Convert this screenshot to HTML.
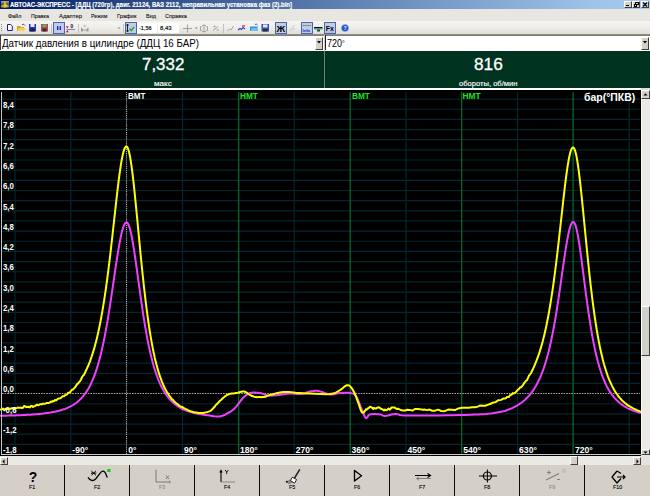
<!DOCTYPE html>
<html><head><meta charset="utf-8">
<style>
*{margin:0;padding:0;box-sizing:border-box}
html,body{width:650px;height:496px;overflow:hidden;background:#d4d0c8;font-family:"Liberation Sans",sans-serif;position:relative}
.abs{position:absolute}
.tx{position:absolute;white-space:nowrap;transform-origin:0 0}
.b3{position:absolute;background:#d4d0c8;border-top:1px solid #fff;border-left:1px solid #fff;border-right:1px solid #404040;border-bottom:1px solid #404040}
</style></head><body>
<div class="abs" style="left:0;top:0;width:650px;height:9px;background:linear-gradient(90deg,#001a62 0%,#1e3c7c 15%,#3a5a92 30.5%,#6e90c0 62%,#9ec2e8 91%,#a8cbf0 100%)"></div>
<svg class="abs" style="left:1px;top:1px" width="8" height="7" viewBox="0 0 8 7">
<defs><linearGradient id="ig" x1="0" y1="0" x2="0" y2="1"><stop offset="0" stop-color="#a8a8a0"/><stop offset="0.55" stop-color="#404068"/><stop offset="1" stop-color="#303040"/></linearGradient></defs>
<rect x="0" y="0" width="8" height="7" fill="url(#ig)"/>
<rect x="3" y="0.3" width="1.8" height="4.5" fill="#d8c020"/>
<path d="M0.3,4 L3,3.6 L5,3.4 L7.7,4 L7.7,6.3 L5,6.6 L3.5,7 L2.8,6.4 L0.3,6.2z" fill="#c8a818"/>
<circle cx="4.4" cy="4.6" r="1.3" fill="#f0e020"/></svg>
<div id="t_title" class="tx" style="left:10.00px;top:0.94px;font-size:6.4px;line-height:7.68px;font-weight:bold;color:#fff;transform:scaleX(0.9405);-webkit-text-stroke:0.15px #fff;">АВТОАС-ЭКСПРЕСС - [ДДЦ (720гр), двиг. 21124, ВАЗ 2112, неправильная установка фаз (2).bin]</div>
<div class="b3" style="left:624px;top:1px;width:8px;height:7px"></div>
<div class="b3" style="left:632px;top:1px;width:8px;height:7px"></div>
<div class="b3" style="left:641px;top:1px;width:8px;height:7px"></div>
<div class="abs" style="left:626px;top:5px;width:3px;height:1px;background:#000"></div>
<div class="abs" style="left:635px;top:2px;width:4px;height:3px;border:1px solid #000;border-top-width:1.5px"></div><div class="abs" style="left:634px;top:4px;width:3px;height:3px;border:1px solid #000;background:#d4d0c8"></div>
<svg class="abs" style="left:642px;top:2px" width="6" height="5" viewBox="0 0 6 5"><path d="M1,0.5 L5,4.5 M5,0.5 L1,4.5" stroke="#000" stroke-width="1.2"/></svg>
<div class="abs" style="left:0;top:9px;width:650px;height:12px;background:#e8e6e1"></div>
<div id="m1" class="tx" style="left:7.90px;top:12.91px;font-size:5.8px;line-height:6.96px;font-weight:normal;color:#101010;transform:scaleX(0.9323);-webkit-text-stroke:0.1px #101010;">Файл</div>
<div id="m2" class="tx" style="left:31.00px;top:12.91px;font-size:5.8px;line-height:6.96px;font-weight:normal;color:#101010;transform:scaleX(0.9187);-webkit-text-stroke:0.1px #101010;">Правка</div>
<div id="m3" class="tx" style="left:58.90px;top:12.91px;font-size:5.8px;line-height:6.96px;font-weight:normal;color:#101010;transform:scaleX(1.0108);-webkit-text-stroke:0.1px #101010;">Адаптер</div>
<div id="m4" class="tx" style="left:90.90px;top:12.91px;font-size:5.8px;line-height:6.96px;font-weight:normal;color:#101010;transform:scaleX(0.9119);-webkit-text-stroke:0.1px #101010;">Режим</div>
<div id="m5" class="tx" style="left:116.90px;top:12.91px;font-size:5.8px;line-height:6.96px;font-weight:normal;color:#101010;transform:scaleX(0.9792);-webkit-text-stroke:0.1px #101010;">График</div>
<div id="m6" class="tx" style="left:145.60px;top:12.91px;font-size:5.8px;line-height:6.96px;font-weight:normal;color:#101010;transform:scaleX(0.9429);-webkit-text-stroke:0.1px #101010;">Вид</div>
<div id="m7" class="tx" style="left:165.20px;top:12.91px;font-size:5.8px;line-height:6.96px;font-weight:normal;color:#101010;transform:scaleX(0.9582);-webkit-text-stroke:0.1px #101010;">Справка</div>
<div class="abs" style="left:0;top:21px;width:650px;height:14px;background:linear-gradient(180deg,#f6f5f2 0%,#efeee9 45%,#dedbd3 100%)"></div>
<div class="abs" style="left:0;top:34px;width:650px;height:1px;background:#8e8c87"></div>
<div class="abs" style="left:1px;top:24px;width:1px;height:1px;background:#8a8a8a"></div>
<div class="abs" style="left:1px;top:26px;width:1px;height:1px;background:#8a8a8a"></div>
<div class="abs" style="left:1px;top:28px;width:1px;height:1px;background:#8a8a8a"></div>
<div class="abs" style="left:1px;top:30px;width:1px;height:1px;background:#8a8a8a"></div>
<div class="abs" style="left:53px;top:22px;width:12.0px;height:12px;background:#c1cde6;border:1px solid #4a68a8"></div>
<div class="abs" style="left:125px;top:22px;width:11.5px;height:12px;background:#c1cde6;border:1px solid #4a68a8"></div>
<div class="abs" style="left:275px;top:22px;width:11.5px;height:12px;background:#c1cde6;border:1px solid #4a68a8"></div>
<div class="abs" style="left:301px;top:22px;width:11.7px;height:12px;background:#c1cde6;border:1px solid #4a68a8"></div>
<div class="abs" style="left:324.2px;top:22px;width:11.6px;height:12px;background:#c1cde6;border:1px solid #4a68a8"></div>
<div class="abs" style="left:51.0px;top:24px;width:1px;height:9px;background:#c5c2bb"></div>
<div class="abs" style="left:78.0px;top:24px;width:1px;height:9px;background:#c5c2bb"></div>
<div class="abs" style="left:122.5px;top:24px;width:1px;height:9px;background:#c5c2bb"></div>
<div class="abs" style="left:223.3px;top:24px;width:1px;height:9px;background:#c5c2bb"></div>
<svg class="abs" style="left:0;top:21px" width="360" height="14" viewBox="0 21 360 14">
<!-- new -->
<path d="M7.5,24.5 h3.2 l1.6,1.6 v4.4 h-4.8z" fill="#fff" stroke="#1a1aa0" stroke-width="1"/>
<!-- open folder -->
<path d="M17,26 h3 l1,1 h3 v4 h-7z" fill="#d8a820"/><path d="M17.5,31 l1.5,-3 h6.5 l-1.5,3z" fill="#f4d060"/>
<path d="M22,24.5 q2,-1 3,1" stroke="#3050b0" stroke-width="1" fill="none"/>
<!-- save blue -->
<rect x="29" y="24" width="7" height="7.5" fill="#2838c0"/><rect x="30.5" y="24" width="4" height="3" fill="#e8e8f0"/><rect x="30.5" y="28.5" width="4" height="3" fill="#202020"/>
<!-- save red -->
<rect x="41" y="24" width="7" height="7.5" fill="#c04060"/><rect x="42.5" y="24.5" width="4" height="2.5" fill="#50c050"/><rect x="42.5" y="28.5" width="4" height="3" fill="#303030"/>
<!-- pause -->
<rect x="57" y="26.2" width="1.3" height="3.8" fill="#1010d0"/><rect x="59.6" y="26.2" width="1.3" height="3.8" fill="#1010d0"/>
<!-- zero icon -->
<path d="M65.8,26.3 h3 l-1.5,2.2z M65.8,32.2 h3 l-1.5,-2.2z" fill="#e01818"/><rect x="66.5" y="29" width="8.5" height="0.9" fill="#5a7ae0"/>
<text x="70.6" y="28.1" font-size="4.8" font-weight="bold" font-family="Liberation Sans" fill="#000">0</text>
<!-- gray axis icon -->
<path d="M81.5,30 h6.5 M83,28.6 l-1.5,1.4 l1.5,1.4 M86.5,28.6 l1.5,1.4 l-1.5,1.4 M81.5,27.5 v4 M88,27.5 v4" stroke="#8a8a8a" stroke-width="0.8" fill="none"/>
<path d="M83.7,24.8 l2,2 M85.7,24.8 l-2,2" stroke="#9a9a9a" stroke-width="0.7"/>
<path d="M117.5,27.5 h3 l-1.5,1.6z" fill="#888"/>
<!-- check btn -->
<path d="M127.5,24 v8 M126.5,25.5 l1,-1.5 l1,1.5 M126.5,30.5 l1,1.5 l1,-1.5" stroke="#202020" stroke-width="1" fill="none"/>
<path d="M129.6,28.6 l1.6,2 l2.9,-3.8" stroke="#10a030" stroke-width="1.3" fill="none"/>
<!-- crosshair gray -->
<path d="M183,28.5 h9 M187.5,24.5 v8" stroke="#9a9a9a" stroke-width="0.9" fill="none"/><path d="M195,27.5 h2.6 l-1.3,1.5z" fill="#777"/>
<path d="M202,26 q2,-2 4,0 M202,31 q2,2 4,0 M201,26 q-1,2.5 0,5 M207,26 q1,2.5 0,5 M204,26.5 v4" stroke="#8a8a8a" stroke-width="0.9" fill="none"/>
<path d="M213,30.5 l5,-4 M213.5,26.5 h2 M214.5,25.5 v2 M216.5,30 h2.5" stroke="#9a9a9a" stroke-width="0.9" fill="none"/>
<!-- gray curve -->
<path d="M227.5,31 l2,-2 l1.5,1 l2.5,-4" stroke="#a0a0a0" stroke-width="0.9" fill="none"/>
<!-- blue red curve -->
<path d="M238,30 l2,-1.5 l1.5,1 l1.5,-2 l2,1.5" stroke="#2040e0" stroke-width="1.2" fill="none"/><path d="M242,26 h3" stroke="#e02020" stroke-width="1.2"/>
<!-- folder blue -->
<path d="M250,26.5 h7.5 v4.5 h-7.5z" fill="#4090d0"/><path d="M250.5,31 l1.5,-3 h6l-1.5,3z" fill="#70c0f0"/><path d="M255,24.5 q1.5,-1 2.5,0.5" stroke="#203080" stroke-width="0.8" fill="none"/>
<!-- floppy -->
<rect x="261.5" y="24" width="7.5" height="7.5" fill="#3050b0"/><rect x="263" y="24.5" width="4.5" height="3" fill="#e0e8f8"/><rect x="263" y="29" width="4.5" height="2.5" fill="#303030"/>
<!-- Ж -->
<text x="276.5" y="31.8" font-size="9.5" font-weight="bold" font-family="Liberation Sans" fill="#000">Ж</text>
<!-- gray disabled -->
<path d="M289.5,31 l5,-6 M291,30.5 l2,-2 l2,1" stroke="#c8c8c8" stroke-width="0.9" fill="none"/>
<!-- info -->
<path d="M303,25.5 h8" stroke="#408060" stroke-width="1" stroke-dasharray="1.5,0.7"/><text x="302.5" y="31.5" font-size="4.2" font-weight="bold" font-family="Liberation Sans" fill="#1020d0">Info</text>
<!-- black teal -->
<rect x="314" y="27" width="8.5" height="1.5" fill="#101010"/><rect x="314" y="28.5" width="8.5" height="1" fill="#20b0a0"/><rect x="317" y="29.5" width="3" height="2" fill="#404040"/>
<!-- Fx -->
<text x="325.8" y="30.5" font-size="7" font-weight="bold" font-family="Liberation Sans" fill="#000">Fx</text><path d="M326,32 h8" stroke="#6090c0" stroke-width="0.7" stroke-dasharray="1,0.6"/>
<!-- help -->
<circle cx="345" cy="28" r="3.6" fill="#2050d0"/><circle cx="345" cy="28" r="3.6" fill="none" stroke="#90b0f0" stroke-width="0.6"/><text x="343.6" y="30.2" font-size="5" font-weight="bold" font-family="Liberation Sans" fill="#fff">?</text>
</svg>
<div class="abs" style="left:137px;top:23.4px;width:20px;height:10px;background:#fff"></div>
<div class="abs" style="left:157.7px;top:23.4px;width:21.3px;height:10px;background:#fff"></div>
<div id="tb1" class="tx" style="left:139.00px;top:24.90px;font-size:5.6px;line-height:6.72px;font-weight:normal;color:#000;transform:scaleX(0.9804);-webkit-text-stroke:0.15px #000;">-1,56</div>
<div id="tb2" class="tx" style="left:160.00px;top:24.90px;font-size:5.6px;line-height:6.72px;font-weight:normal;color:#000;transform:scaleX(1.0560);-webkit-text-stroke:0.15px #000;">8,43</div>
<div class="abs" style="left:0;top:35px;width:650px;height:16px;background:#fff"></div>
<div class="abs" style="left:0;top:35px;width:324px;height:1px;background:#7f7d78"></div>
<div class="abs" style="left:0;top:35px;width:1px;height:15px;background:#404040"></div>
<div class="abs" style="left:324px;top:35px;width:1px;height:16px;background:#d4d0c8"></div>
<div class="abs" style="left:325px;top:35px;width:325px;height:1px;background:#7f7d78"></div>
<div class="abs" style="left:325px;top:35px;width:1px;height:15px;background:#202020"></div>
<div class="b3" style="left:315.3px;top:36.5px;width:8px;height:13.5px"></div>
<svg class="abs" style="left:317.3px;top:41px" width="4" height="3" viewBox="0 0 4 3"><path d="M0,0 h4 l-2,2.5z" fill="#000"/></svg>
<div class="b3" style="left:641px;top:36.5px;width:8px;height:13.5px"></div>
<svg class="abs" style="left:643px;top:41px" width="4" height="3" viewBox="0 0 4 3"><path d="M0,0 h4 l-2,2.5z" fill="#000"/></svg>
<div id="dd1" class="tx" style="left:2.30px;top:37.53px;font-size:10px;line-height:12.0px;font-weight:normal;color:#000;transform:scaleX(0.9754);">Датчик давления в цилиндре (ДДЦ 16 БАР)</div>
<div id="dd2" class="tx" style="left:327.10px;top:37.53px;font-size:10px;line-height:12.0px;font-weight:normal;color:#000;transform:scaleX(0.8949);">720<span style="font-size:8px;vertical-align:1px">°</span></div>
<div class="abs" style="left:0;top:51px;width:650px;height:36.5px;background:#003220"></div>
<div class="abs" style="left:324px;top:51px;width:1px;height:36.5px;background:#6f8078"></div>
<div id="g1" class="tx" style="left:141.50px;top:54.51px;font-size:17px;line-height:20.4px;font-weight:normal;color:#fff;transform:scaleX(0.9942);-webkit-text-stroke:0.3px #fff;">7,332</div>
<div id="g2" class="tx" style="left:153.80px;top:78.73px;font-size:8px;line-height:9.6px;font-weight:normal;color:#fff;transform:scaleX(1.0087);-webkit-text-stroke:0.15px #fff;">макс</div>
<div id="g3" class="tx" style="left:473.50px;top:54.51px;font-size:17px;line-height:20.4px;font-weight:normal;color:#fff;transform:scaleX(1.0150);-webkit-text-stroke:0.3px #fff;">816</div>
<div id="g4" class="tx" style="left:458.50px;top:78.73px;font-size:8px;line-height:9.6px;font-weight:normal;color:#fff;transform:scaleX(0.9465);-webkit-text-stroke:0.15px #fff;">обороты, об/мин</div>
<div class="abs" style="left:0;top:87.5px;width:650px;height:2.6px;background:#fff"></div>
<div class="abs" style="left:641px;top:88px;width:9px;height:2.5px;background:#dedcd6"></div>
<svg class="abs" style="left:0;top:90px" width="641" height="365" viewBox="0 0 641 365">
<rect x="0" y="0" width="641" height="365" fill="#000"/>
<line x1="2" y1="9.08" x2="640" y2="9.08" stroke="#03262f" stroke-width="1.2"/>
<line x1="2" y1="19.23" x2="640" y2="19.23" stroke="#03262f" stroke-width="1.2"/>
<line x1="2" y1="29.39" x2="640" y2="29.39" stroke="#03262f" stroke-width="1.2"/>
<line x1="2" y1="39.54" x2="640" y2="39.54" stroke="#03262f" stroke-width="1.2"/>
<line x1="2" y1="49.70" x2="640" y2="49.70" stroke="#03262f" stroke-width="1.2"/>
<line x1="2" y1="59.86" x2="640" y2="59.86" stroke="#03262f" stroke-width="1.2"/>
<line x1="2" y1="70.01" x2="640" y2="70.01" stroke="#03262f" stroke-width="1.2"/>
<line x1="2" y1="80.17" x2="640" y2="80.17" stroke="#03262f" stroke-width="1.2"/>
<line x1="2" y1="90.32" x2="640" y2="90.32" stroke="#03262f" stroke-width="1.2"/>
<line x1="2" y1="100.48" x2="640" y2="100.48" stroke="#03262f" stroke-width="1.2"/>
<line x1="2" y1="110.64" x2="640" y2="110.64" stroke="#03262f" stroke-width="1.2"/>
<line x1="2" y1="120.79" x2="640" y2="120.79" stroke="#03262f" stroke-width="1.2"/>
<line x1="2" y1="130.95" x2="640" y2="130.95" stroke="#03262f" stroke-width="1.2"/>
<line x1="2" y1="141.10" x2="640" y2="141.10" stroke="#03262f" stroke-width="1.2"/>
<line x1="2" y1="151.26" x2="640" y2="151.26" stroke="#03262f" stroke-width="1.2"/>
<line x1="2" y1="161.42" x2="640" y2="161.42" stroke="#03262f" stroke-width="1.2"/>
<line x1="2" y1="171.57" x2="640" y2="171.57" stroke="#03262f" stroke-width="1.2"/>
<line x1="2" y1="181.73" x2="640" y2="181.73" stroke="#03262f" stroke-width="1.2"/>
<line x1="2" y1="191.88" x2="640" y2="191.88" stroke="#03262f" stroke-width="1.2"/>
<line x1="2" y1="202.04" x2="640" y2="202.04" stroke="#03262f" stroke-width="1.2"/>
<line x1="2" y1="212.20" x2="640" y2="212.20" stroke="#03262f" stroke-width="1.2"/>
<line x1="2" y1="222.35" x2="640" y2="222.35" stroke="#03262f" stroke-width="1.2"/>
<line x1="2" y1="232.51" x2="640" y2="232.51" stroke="#03262f" stroke-width="1.2"/>
<line x1="2" y1="242.66" x2="640" y2="242.66" stroke="#03262f" stroke-width="1.2"/>
<line x1="2" y1="252.82" x2="640" y2="252.82" stroke="#03262f" stroke-width="1.2"/>
<line x1="2" y1="262.98" x2="640" y2="262.98" stroke="#03262f" stroke-width="1.2"/>
<line x1="2" y1="273.13" x2="640" y2="273.13" stroke="#03262f" stroke-width="1.2"/>
<line x1="2" y1="283.29" x2="640" y2="283.29" stroke="#03262f" stroke-width="1.2"/>
<line x1="2" y1="293.44" x2="640" y2="293.44" stroke="#03262f" stroke-width="1.2"/>
<line x1="2" y1="313.76" x2="640" y2="313.76" stroke="#03262f" stroke-width="1.2"/>
<line x1="2" y1="323.91" x2="640" y2="323.91" stroke="#03262f" stroke-width="1.2"/>
<line x1="2" y1="334.07" x2="640" y2="334.07" stroke="#03262f" stroke-width="1.2"/>
<line x1="2" y1="344.22" x2="640" y2="344.22" stroke="#03262f" stroke-width="1.2"/>
<line x1="2" y1="354.38" x2="640" y2="354.38" stroke="#03262f" stroke-width="1.2"/>
<line x1="15.02" y1="2" x2="15.02" y2="364" stroke="#03262f" stroke-width="1.2"/>
<line x1="70.86" y1="2" x2="70.86" y2="364" stroke="#03262f" stroke-width="1.2"/>
<line x1="182.54" y1="2" x2="182.54" y2="364" stroke="#03262f" stroke-width="1.2"/>
<line x1="238.75" y1="2" x2="238.75" y2="364" stroke="#06702c" stroke-width="1.2"/>
<line x1="294.22" y1="2" x2="294.22" y2="364" stroke="#03262f" stroke-width="1.2"/>
<line x1="350.20" y1="2" x2="350.20" y2="364" stroke="#06702c" stroke-width="1.2"/>
<line x1="405.90" y1="2" x2="405.90" y2="364" stroke="#03262f" stroke-width="1.2"/>
<line x1="461.65" y1="2" x2="461.65" y2="364" stroke="#06702c" stroke-width="1.2"/>
<line x1="517.58" y1="2" x2="517.58" y2="364" stroke="#03262f" stroke-width="1.2"/>
<line x1="573.10" y1="2" x2="573.10" y2="364" stroke="#06702c" stroke-width="1.2"/>
<line x1="629.26" y1="2" x2="629.26" y2="364" stroke="#03262f" stroke-width="1.2"/>
<line x1="126.5" y1="2" x2="126.5" y2="364" stroke="#a8aeb4" stroke-width="1.1" stroke-dasharray="1.1,0.8"/>
<line x1="2" y1="303.50" x2="640" y2="303.50" stroke="#a0a0a0" stroke-width="1" stroke-dasharray="1.6,1"/>
<path d="M0.00,325.80 L1.00,325.78 L2.00,325.76 L3.00,325.74 L4.00,325.71 L5.00,325.69 L6.00,325.67 L7.00,325.64 L8.00,325.61 L9.00,325.59 L10.00,325.56 L11.00,325.53 L12.00,325.50 L13.00,325.47 L14.00,325.44 L15.00,325.40 L16.00,325.37 L17.00,325.33 L18.00,325.29 L19.00,325.25 L20.00,325.21 L21.00,325.17 L22.00,325.12 L23.00,325.08 L24.00,325.03 L25.00,324.98 L26.00,324.93 L27.00,324.87 L28.00,324.82 L29.00,324.76 L30.00,324.69 L31.00,324.63 L32.00,324.56 L33.00,324.49 L34.00,324.42 L35.00,324.34 L36.00,324.26 L37.00,324.17 L38.00,324.09 L39.00,323.99 L40.00,323.90 L41.00,323.79 L42.00,323.69 L43.00,323.57 L44.00,323.46 L45.00,323.33 L46.00,323.20 L47.00,323.07 L48.00,322.92 L49.00,322.77 L50.00,322.62 L51.00,322.45 L52.00,322.27 L53.00,322.09 L54.00,321.89 L55.00,321.69 L56.00,321.47 L57.00,321.24 L58.00,321.00 L59.00,320.74 L60.00,320.47 L61.00,320.18 L62.00,319.88 L63.00,319.55 L64.00,319.21 L65.00,318.85 L66.00,318.46 L67.00,318.06 L68.00,317.62 L69.00,317.16 L70.00,316.67 L71.00,316.15 L72.00,315.59 L73.00,315.00 L74.00,314.37 L75.00,313.69 L76.00,312.97 L77.00,312.20 L78.00,311.38 L79.00,310.51 L80.00,309.57 L81.00,308.56 L82.00,307.49 L83.00,306.34 L84.00,305.10 L85.00,303.78 L86.00,302.37 L87.00,300.85 L88.00,299.21 L89.00,297.46 L90.00,295.59 L91.00,293.57 L92.00,291.41 L93.00,289.09 L94.00,286.60 L95.00,283.93 L96.00,281.06 L97.00,278.00 L98.00,274.71 L99.00,271.20 L100.00,267.45 L100.25,266.48 L100.50,265.49 L100.75,264.48 L101.00,263.46 L101.25,262.42 L101.50,261.36 L101.75,260.29 L102.00,259.20 L102.25,258.09 L102.50,256.97 L102.75,255.83 L103.00,254.67 L103.25,253.50 L103.50,252.31 L103.75,251.10 L104.00,249.87 L104.25,248.63 L104.50,247.37 L104.75,246.09 L105.00,244.80 L105.25,243.48 L105.50,242.16 L105.75,240.81 L106.00,239.45 L106.25,238.06 L106.50,236.67 L106.75,235.25 L107.00,233.82 L107.25,232.38 L107.50,230.91 L107.75,229.43 L108.00,227.94 L108.25,226.43 L108.50,224.90 L108.75,223.36 L109.00,221.81 L109.25,220.24 L109.50,218.66 L109.75,217.06 L110.00,215.45 L110.25,213.83 L110.50,212.20 L110.75,210.56 L111.00,208.91 L111.25,207.25 L111.50,205.57 L111.75,203.89 L112.00,202.21 L112.25,200.51 L112.50,198.81 L112.75,197.11 L113.00,195.40 L113.25,193.69 L113.50,191.97 L113.75,190.26 L114.00,188.54 L114.25,186.83 L114.50,185.12 L114.75,183.41 L115.00,181.70 L115.25,180.01 L115.50,178.31 L115.75,176.63 L116.00,174.96 L116.25,173.30 L116.50,171.65 L116.75,170.01 L117.00,168.39 L117.25,166.79 L117.50,165.21 L117.75,163.64 L118.00,162.10 L118.25,160.58 L118.50,159.08 L118.75,157.61 L119.00,156.17 L119.25,154.76 L119.50,153.37 L119.75,152.02 L120.00,150.71 L120.25,149.42 L120.50,148.18 L120.75,146.97 L121.00,145.80 L121.25,144.68 L121.50,143.59 L121.75,142.55 L122.00,141.55 L122.25,140.60 L122.50,139.70 L122.75,138.85 L123.00,138.05 L123.25,137.29 L123.50,136.59 L123.75,135.94 L124.00,135.35 L124.25,134.81 L124.50,134.32 L124.75,133.90 L125.00,133.52 L125.25,133.21 L125.50,132.95 L125.75,132.75 L126.00,132.61 L126.25,132.53 L126.50,132.50 L126.75,132.54 L127.00,132.65 L127.25,132.82 L127.50,133.07 L127.75,133.38 L128.00,133.76 L128.25,134.20 L128.50,134.71 L128.75,135.29 L129.00,135.93 L129.25,136.63 L129.50,137.39 L129.75,138.21 L130.00,139.10 L130.25,140.04 L130.50,141.03 L130.75,142.08 L131.00,143.19 L131.25,144.34 L131.50,145.55 L131.75,146.80 L132.00,148.10 L132.25,149.44 L132.50,150.82 L132.75,152.24 L133.00,153.70 L133.25,155.20 L133.50,156.73 L133.75,158.30 L134.00,159.89 L134.25,161.51 L134.50,163.16 L134.75,164.83 L135.00,166.53 L135.25,168.24 L135.50,169.97 L135.75,171.73 L136.00,173.49 L136.25,175.27 L136.50,177.06 L136.75,178.86 L137.00,180.67 L137.25,182.48 L137.50,184.30 L137.75,186.12 L138.00,187.95 L138.25,189.77 L138.50,191.60 L138.75,193.42 L139.00,195.24 L139.25,197.05 L139.50,198.86 L139.75,200.66 L140.00,202.46 L140.25,204.25 L140.50,206.02 L140.75,207.79 L141.00,209.54 L141.25,211.28 L141.50,213.01 L141.75,214.73 L142.00,216.43 L142.25,218.12 L142.50,219.79 L142.75,221.45 L143.00,223.08 L143.25,224.71 L143.50,226.31 L143.75,227.90 L144.00,229.47 L144.25,231.02 L144.50,232.56 L144.75,234.07 L145.00,235.57 L145.25,237.05 L145.50,238.51 L145.75,239.95 L146.00,241.37 L146.25,242.77 L146.50,244.15 L146.75,245.51 L147.00,246.86 L147.25,248.18 L147.50,249.49 L147.75,250.77 L148.00,252.04 L148.25,253.28 L148.50,254.51 L148.75,255.72 L149.00,256.91 L149.25,258.08 L149.50,259.24 L149.75,260.37 L150.00,261.49 L150.25,262.59 L150.50,263.67 L150.75,264.73 L151.00,265.78 L151.25,266.81 L151.50,267.82 L151.75,268.81 L152.00,269.79 L152.25,270.75 L152.50,271.70 L152.75,272.63 L153.00,273.54 L153.25,274.44 L153.50,275.32 L153.75,276.19 L154.00,277.04 L154.25,277.88 L154.50,278.70 L154.75,279.51 L155.00,280.30 L156.00,283.35 L157.00,286.18 L158.00,288.82 L159.00,291.28 L160.00,293.57 L161.00,295.70 L162.00,297.69 L163.00,299.55 L164.00,301.27 L165.00,302.88 L166.00,304.39 L167.00,305.79 L168.00,307.10 L169.00,308.33 L170.00,309.47 L171.00,310.54 L172.00,311.55 L173.00,312.49 L174.00,313.37 L175.00,314.20 L176.00,314.97 L177.00,315.70 L178.00,316.39 L179.00,317.03 L180.00,317.64 L181.00,318.21 L182.00,319.00 L183.26,319.45 L184.96,320.09 L187.00,320.84 L189.26,321.62 L191.63,322.37 L194.00,323.00 L196.50,323.54 L199.26,324.04 L202.12,324.50 L204.96,324.92 L207.63,325.29 L210.00,325.60 L212.04,325.89 L213.85,326.16 L215.50,326.38 L217.04,326.51 L218.52,326.53 L220.00,326.40 L221.47,326.08 L222.89,325.60 L224.25,325.00 L225.56,324.33 L226.81,323.65 L228.00,323.00 L229.13,322.39 L230.19,321.79 L231.19,321.16 L232.15,320.50 L233.08,319.79 L234.00,319.00 L234.89,318.12 L235.74,317.15 L236.56,316.12 L237.37,315.07 L238.18,314.02 L239.00,313.00 L239.82,311.98 L240.63,310.93 L241.44,309.88 L242.26,308.85 L243.11,307.88 L244.00,307.00 L244.90,306.17 L245.78,305.37 L246.69,304.62 L247.67,303.96 L248.76,303.41 L250.00,303.00 L251.44,302.74 L253.04,302.61 L254.75,302.59 L256.52,302.66 L258.29,302.80 L260.00,303.00 L261.55,303.34 L262.96,303.84 L264.38,304.43 L265.93,304.98 L267.75,305.40 L270.00,305.60 L272.87,305.51 L276.30,305.19 L280.00,304.74 L283.70,304.26 L287.13,303.85 L290.00,303.60 L292.25,303.56 L294.07,303.66 L295.62,303.83 L297.04,303.99 L298.45,304.07 L300.00,304.00 L301.69,303.74 L303.41,303.34 L305.12,302.86 L306.81,302.37 L308.45,301.93 L310.00,301.60 L311.40,301.35 L312.67,301.12 L313.88,300.94 L315.11,300.84 L316.46,300.85 L318.00,301.00 L319.79,301.39 L321.78,302.01 L323.88,302.75 L326.00,303.47 L328.07,304.06 L330.00,304.40 L331.78,304.43 L333.48,304.24 L335.12,303.91 L336.74,303.54 L338.36,303.21 L340.00,303.00 L341.71,302.88 L343.48,302.79 L345.25,302.73 L346.96,302.73 L348.56,302.81 L350.00,303.00 L351.23,303.20 L352.30,303.37 L353.25,303.62 L354.15,304.07 L355.05,304.83 L356.00,306.00 L357.02,307.77 L358.07,310.07 L359.12,312.69 L360.15,315.37 L361.12,317.89 L362.00,320.00 L362.78,321.81 L363.48,323.54 L364.12,325.10 L364.74,326.41 L365.36,327.41 L366.00,328.00 L366.60,328.03 L367.11,327.53 L367.62,326.70 L368.22,325.76 L368.99,324.93 L370.00,324.40 L371.38,324.17 L373.07,324.07 L374.94,324.07 L376.81,324.15 L378.55,324.27 L380.00,324.40 L381.06,324.62 L381.85,324.95 L382.50,325.32 L383.15,325.67 L383.94,325.92 L385.00,326.00 L386.38,325.84 L387.96,325.47 L389.69,325.01 L391.48,324.55 L393.28,324.18 L395.00,324.00 L396.38,324.05 L397.41,324.27 L398.44,324.57 L399.81,324.91 L401.89,325.21 L405.00,325.40 L409.39,325.49 L414.81,325.53 L420.94,325.54 L427.41,325.51 L433.88,325.46 L440.00,325.40 L446.06,325.32 L452.41,325.20 L458.75,325.06 L464.81,324.91 L470.32,324.75 L475.00,324.60 L478.66,324.46 L481.48,324.34 L483.75,324.21 L485.74,324.06 L487.73,323.86 L490.00,323.60 L492.67,323.23 L495.56,322.76 L498.44,322.24 L501.11,321.73 L503.37,321.30 L505.00,321.00 L506.00,320.47 L507.00,320.12 L508.00,319.75 L509.00,319.37 L510.00,318.97 L511.00,318.55 L512.00,318.11 L513.00,317.64 L514.00,317.16 L515.00,316.64 L516.00,316.10 L517.00,315.54 L518.00,314.94 L519.00,314.31 L520.00,313.65 L521.00,312.95 L522.00,312.21 L523.00,311.43 L524.00,310.60 L525.00,309.73 L526.00,308.80 L527.00,307.83 L528.00,306.79 L529.00,305.69 L530.00,304.52 L531.00,303.28 L532.00,301.96 L533.00,300.56 L534.00,299.07 L535.00,297.48 L536.00,295.78 L537.00,293.98 L538.00,292.06 L539.00,290.00 L540.00,287.81 L541.00,285.48 L542.00,282.98 L543.00,280.31 L544.00,277.46 L545.00,274.41 L545.25,273.62 L545.50,272.81 L545.75,271.99 L546.00,271.16 L546.25,270.31 L546.50,269.45 L546.75,268.57 L547.00,267.68 L547.25,266.78 L547.50,265.86 L547.75,264.92 L548.00,263.98 L548.25,263.01 L548.50,262.03 L548.75,261.03 L549.00,260.02 L549.25,258.99 L549.50,257.95 L549.75,256.89 L550.00,255.81 L550.25,254.71 L550.50,253.60 L550.75,252.47 L551.00,251.32 L551.25,250.16 L551.50,248.98 L551.75,247.78 L552.00,246.56 L552.25,245.33 L552.50,244.07 L552.75,242.80 L553.00,241.51 L553.25,240.20 L553.50,238.88 L553.75,237.53 L554.00,236.17 L554.25,234.79 L554.50,233.39 L554.75,231.97 L555.00,230.54 L555.25,229.09 L555.50,227.62 L555.75,226.13 L556.00,224.62 L556.25,223.10 L556.50,221.56 L556.75,220.00 L557.00,218.43 L557.25,216.84 L557.50,215.23 L557.75,213.61 L558.00,211.98 L558.25,210.33 L558.50,208.67 L558.75,206.99 L559.00,205.30 L559.25,203.60 L559.50,201.89 L559.75,200.17 L560.00,198.44 L560.25,196.70 L560.50,194.96 L560.75,193.21 L561.00,191.45 L561.25,189.69 L561.50,187.92 L561.75,186.15 L562.00,184.39 L562.25,182.62 L562.50,180.85 L562.75,179.09 L563.00,177.34 L563.25,175.59 L563.50,173.84 L563.75,172.11 L564.00,170.39 L564.25,168.68 L564.50,166.99 L564.75,165.32 L565.00,163.66 L565.25,162.03 L565.50,160.41 L565.75,158.82 L566.00,157.26 L566.25,155.73 L566.50,154.23 L566.75,152.76 L567.00,151.32 L567.25,149.92 L567.50,148.56 L567.75,147.24 L568.00,145.97 L568.25,144.74 L568.50,143.55 L568.75,142.42 L569.00,141.33 L569.25,140.30 L569.50,139.32 L569.75,138.39 L570.00,137.52 L570.25,136.72 L570.50,135.97 L570.75,135.28 L571.00,134.66 L571.25,134.09 L571.50,133.60 L571.75,133.17 L572.00,132.80 L572.25,132.51 L572.50,132.28 L572.75,132.12 L573.00,132.02 L573.25,132.00 L573.50,132.05 L573.75,132.19 L574.00,132.41 L574.25,132.71 L574.50,133.09 L574.75,133.55 L575.00,134.09 L575.25,134.70 L575.50,135.40 L575.75,136.16 L576.00,137.01 L576.25,137.92 L576.50,138.90 L576.75,139.95 L577.00,141.07 L577.25,142.25 L577.50,143.49 L577.75,144.79 L578.00,146.15 L578.25,147.56 L578.50,149.02 L578.75,150.53 L579.00,152.09 L579.25,153.69 L579.50,155.33 L579.75,157.00 L580.00,158.72 L580.25,160.47 L580.50,162.24 L580.75,164.05 L581.00,165.88 L581.25,167.73 L581.50,169.60 L581.75,171.49 L582.00,173.40 L582.25,175.32 L582.50,177.25 L582.75,179.19 L583.00,181.13 L583.25,183.08 L583.50,185.03 L583.75,186.99 L584.00,188.94 L584.25,190.89 L584.50,192.84 L584.75,194.78 L585.00,196.71 L585.25,198.64 L585.50,200.55 L585.75,202.46 L586.00,204.35 L586.25,206.23 L586.50,208.10 L586.75,209.95 L587.00,211.78 L587.25,213.60 L587.50,215.40 L587.75,217.18 L588.00,218.94 L588.25,220.69 L588.50,222.41 L588.75,224.12 L589.00,225.80 L589.25,227.46 L589.50,229.10 L589.75,230.72 L590.00,232.32 L590.25,233.90 L590.50,235.45 L590.75,236.99 L591.00,238.50 L591.25,239.98 L591.50,241.45 L591.75,242.89 L592.00,244.31 L592.25,245.71 L592.50,247.09 L592.75,248.44 L593.00,249.78 L593.25,251.09 L593.50,252.38 L593.75,253.64 L594.00,254.89 L594.25,256.12 L594.50,257.32 L594.75,258.51 L595.00,259.67 L595.25,260.81 L595.50,261.94 L595.75,263.04 L596.00,264.13 L596.25,265.19 L596.50,266.24 L596.75,267.27 L597.00,268.28 L597.25,269.27 L597.50,270.24 L597.75,271.20 L598.00,272.14 L598.25,273.06 L598.50,273.97 L598.75,274.86 L599.00,275.73 L599.25,276.59 L599.50,277.43 L599.75,278.25 L600.00,279.06 L601.00,282.16 L602.00,285.04 L603.00,287.71 L604.00,290.20 L605.00,292.50 L606.00,294.65 L607.00,296.65 L608.00,298.50 L609.00,300.23 L610.00,301.85 L611.00,303.35 L612.00,304.75 L613.00,306.07 L614.00,307.29 L615.00,308.44 L616.00,309.51 L617.00,310.51 L618.00,311.46 L619.00,312.34 L620.00,313.17 L621.00,313.95 L622.00,314.69 L623.00,315.38 L624.00,316.03 L625.00,316.64 L626.00,317.22 L627.00,317.77 L628.00,318.29 L629.00,318.78 L630.00,319.24 L631.00,319.68 L632.00,320.09 L633.00,320.48 L634.00,320.86 L635.00,321.21 L636.00,321.55 L637.00,321.87 L638.00,322.17 L639.00,322.46 L640.00,322.74 L641.00,323.00" fill="none" stroke="#f040ff" stroke-width="2" stroke-linejoin="round"/>
<path d="M0.00,319.41 L1.00,319.57 L2.00,319.29 L3.00,318.50 L4.00,319.43 L5.00,319.16 L6.00,318.65 L7.00,319.09 L8.00,318.92 L9.00,318.82 L10.00,318.62 L11.00,318.78 L12.00,318.12 L13.00,318.30 L14.00,318.07 L15.00,318.47 L16.00,318.13 L17.00,317.89 L18.00,317.58 L19.00,317.72 L20.00,317.74 L21.00,317.50 L22.00,318.10 L23.00,317.86 L24.00,316.08 L25.00,316.33 L26.00,316.97 L27.00,316.74 L28.00,316.89 L29.00,316.76 L30.00,317.47 L31.00,315.87 L32.00,316.05 L33.00,316.98 L34.00,316.19 L35.00,316.03 L36.00,315.32 L37.00,314.63 L38.00,315.26 L39.00,315.03 L40.00,314.23 L41.00,314.26 L42.00,314.31 L43.00,313.69 L44.00,313.83 L45.00,313.67 L46.00,313.38 L47.00,312.87 L48.00,313.08 L49.00,312.92 L50.00,312.35 L51.00,311.52 L52.00,311.88 L53.00,310.98 L54.00,311.23 L55.00,309.97 L56.00,310.46 L57.00,309.62 L58.00,308.63 L59.00,308.59 L60.00,308.27 L61.00,307.87 L62.00,306.77 L63.00,306.16 L64.00,306.16 L65.00,305.24 L66.00,304.91 L67.00,304.46 L68.00,302.66 L69.00,302.76 L70.00,302.40 L71.00,300.87 L72.00,299.76 L73.00,299.52 L74.00,298.31 L75.00,297.55 L76.00,295.89 L77.00,294.21 L78.00,293.58 L79.00,292.13 L80.00,291.24 L81.00,289.52 L82.00,287.26 L83.00,285.78 L84.00,284.74 L85.00,282.78 L86.00,280.36 L87.00,278.42 L88.00,276.27 L89.00,273.85 L90.00,271.35 L91.00,268.47 L92.00,265.48 L93.00,262.34 L94.00,259.14 L95.00,255.47 L96.00,251.72 L97.00,247.68 L98.00,243.39 L99.00,238.81 L100.00,233.93 L100.25,232.66 L100.50,231.38 L100.75,230.07 L101.00,228.75 L101.25,227.40 L101.50,226.03 L101.75,224.65 L102.00,223.24 L102.25,221.81 L102.50,220.36 L102.75,218.89 L103.00,217.39 L103.25,215.88 L103.50,214.34 L103.75,212.78 L104.00,211.20 L104.25,209.60 L104.50,207.97 L104.75,206.33 L105.00,204.66 L105.25,202.97 L105.50,201.25 L105.75,199.52 L106.00,197.76 L106.25,195.98 L106.50,194.17 L106.75,192.35 L107.00,190.50 L107.25,188.63 L107.50,186.74 L107.75,184.83 L108.00,182.89 L108.25,180.94 L108.50,178.96 L108.75,176.97 L109.00,174.95 L109.25,172.92 L109.50,170.86 L109.75,168.79 L110.00,166.70 L110.25,164.59 L110.50,162.47 L110.75,160.33 L111.00,158.17 L111.25,156.00 L111.50,153.82 L111.75,151.62 L112.00,149.41 L112.25,147.19 L112.50,144.96 L112.75,142.72 L113.00,140.47 L113.25,138.22 L113.50,135.96 L113.75,133.69 L114.00,131.43 L114.25,129.16 L114.50,126.89 L114.75,124.63 L115.00,122.37 L115.25,120.11 L115.50,117.86 L115.75,115.62 L116.00,113.39 L116.25,111.17 L116.50,108.97 L116.75,106.78 L117.00,104.61 L117.25,102.47 L117.50,100.34 L117.75,98.24 L118.00,96.16 L118.25,94.12 L118.50,92.10 L118.75,90.12 L119.00,88.17 L119.25,86.26 L119.50,84.40 L119.75,82.57 L120.00,80.79 L120.25,79.05 L120.50,77.37 L120.75,75.73 L121.00,74.15 L121.25,72.63 L121.50,71.16 L121.75,69.75 L122.00,68.41 L122.25,67.12 L122.50,65.91 L122.75,64.76 L123.00,63.68 L123.25,62.67 L123.50,61.73 L123.75,60.86 L124.00,60.07 L124.25,59.36 L124.50,58.73 L124.75,58.17 L125.00,57.69 L125.25,57.29 L125.50,56.97 L125.75,56.74 L126.00,56.58 L126.25,56.51 L126.50,56.52 L126.75,56.62 L127.00,56.83 L127.25,57.13 L127.50,57.52 L127.75,58.02 L128.00,58.60 L128.25,59.28 L128.50,60.05 L128.75,60.92 L129.00,61.87 L129.25,62.91 L129.50,64.04 L129.75,65.25 L130.00,66.55 L130.25,67.93 L130.50,69.38 L130.75,70.92 L131.00,72.53 L131.25,74.21 L131.50,75.96 L131.75,77.77 L132.00,79.66 L132.25,81.60 L132.50,83.60 L132.75,85.66 L133.00,87.78 L133.25,89.94 L133.50,92.16 L133.75,94.42 L134.00,96.72 L134.25,99.06 L134.50,101.44 L134.75,103.86 L135.00,106.31 L135.25,108.78 L135.50,111.29 L135.75,113.81 L136.00,116.36 L136.25,118.93 L136.50,121.51 L136.75,124.11 L137.00,126.72 L137.25,129.34 L137.50,131.96 L137.75,134.59 L138.00,137.23 L138.25,139.86 L138.50,142.49 L138.75,145.12 L139.00,147.75 L139.25,150.36 L139.50,152.97 L139.75,155.57 L140.00,158.16 L140.25,160.74 L140.50,163.30 L140.75,165.85 L141.00,168.37 L141.25,170.88 L141.50,173.38 L141.75,175.85 L142.00,178.30 L142.25,180.73 L142.50,183.13 L142.75,185.51 L143.00,187.87 L143.25,190.20 L143.50,192.51 L143.75,194.79 L144.00,197.04 L144.25,199.27 L144.50,201.47 L144.75,203.64 L145.00,205.78 L145.25,207.90 L145.50,209.99 L145.75,212.04 L146.00,214.07 L146.25,216.07 L146.50,218.04 L146.75,219.98 L147.00,221.89 L147.25,223.78 L147.50,225.63 L147.75,227.45 L148.00,229.25 L148.25,231.01 L148.50,232.75 L148.75,234.46 L149.00,236.14 L149.25,237.80 L149.50,239.42 L149.75,241.02 L150.00,242.59 L150.25,244.13 L150.50,245.65 L150.75,247.13 L151.00,248.60 L151.25,250.03 L151.50,251.45 L151.75,252.83 L152.00,254.19 L152.25,255.54 L152.50,256.83 L152.75,258.15 L153.00,259.37 L153.25,260.60 L153.50,261.83 L153.75,263.03 L154.00,264.16 L154.25,265.35 L154.50,266.41 L154.75,267.65 L155.00,268.67 L156.00,272.77 L157.00,276.58 L158.00,280.15 L159.00,283.43 L160.00,286.38 L161.00,289.17 L162.00,291.83 L163.00,294.18 L164.00,296.55 L165.00,298.61 L166.00,300.37 L167.00,302.17 L168.00,303.58 L169.00,305.30 L170.00,306.61 L171.00,307.96 L172.00,309.27 L173.00,309.95 L174.00,311.26 L175.00,312.07 L176.00,313.15 L177.00,313.76 L178.00,314.62 L179.00,315.42 L180.00,316.14 L181.00,316.70 L182.00,316.91 L182.85,317.40 L184.00,318.21 L185.38,318.87 L186.89,319.48 L188.46,320.50 L190.00,321.05 L191.55,321.59 L193.19,321.93 L194.88,322.47 L196.59,322.58 L198.31,322.99 L200.00,322.94 L201.71,323.02 L203.48,322.89 L205.25,322.42 L206.96,322.11 L208.56,321.62 L210.00,321.13 L211.23,320.31 L212.30,319.16 L213.25,318.30 L214.15,317.23 L215.05,316.29 L216.00,314.81 L217.00,313.92 L218.00,313.10 L219.00,311.76 L220.00,310.76 L221.00,309.98 L222.00,309.11 L222.98,308.04 L223.93,307.31 L224.88,306.43 L225.85,305.82 L226.88,304.97 L228.00,304.51 L229.22,303.88 L230.52,303.68 L231.88,303.49 L233.26,303.48 L234.64,303.26 L236.00,302.92 L237.36,302.79 L238.74,302.44 L240.12,301.99 L241.48,301.68 L242.78,301.53 L244.00,301.41 L245.12,301.93 L246.15,302.46 L247.12,302.99 L248.07,303.88 L249.02,304.30 L250.00,304.94 L250.98,305.38 L251.93,306.07 L252.88,306.03 L253.85,306.60 L254.88,306.90 L256.00,307.04 L257.24,307.27 L258.59,307.11 L260.00,306.99 L261.41,307.31 L262.76,307.00 L264.00,306.96 L265.02,306.66 L265.85,306.64 L266.62,306.28 L267.48,305.73 L268.56,305.52 L270.00,305.01 L271.85,304.50 L274.00,303.93 L276.38,303.29 L278.89,302.81 L281.46,302.32 L284.00,301.96 L286.39,302.05 L288.67,301.97 L291.00,302.28 L293.56,302.57 L296.50,302.95 L300.00,302.94 L304.42,303.42 L309.70,303.54 L315.38,303.79 L320.96,303.96 L326.00,304.19 L330.00,304.01 L332.85,303.51 L334.89,302.95 L336.38,302.31 L337.56,301.52 L338.68,300.91 L340.00,300.15 L341.47,299.18 L342.89,298.00 L344.25,296.76 L345.56,295.82 L346.81,295.25 L348.00,295.24 L349.14,295.54 L350.22,296.30 L351.25,297.57 L352.22,298.95 L353.14,300.43 L354.00,301.98 L354.78,303.51 L355.48,305.30 L356.12,306.79 L356.74,308.68 L357.36,310.47 L358.00,312.01 L358.67,314.04 L359.33,315.99 L360.00,317.93 L360.67,319.90 L361.33,321.41 L362.00,322.37 L362.67,322.66 L363.33,322.64 L364.00,322.23 L364.67,320.92 L365.33,320.58 L366.00,319.31 L366.67,319.61 L367.33,319.18 L368.00,318.36 L368.67,317.85 L369.33,317.54 L370.00,316.70 L370.64,316.84 L371.26,317.30 L371.88,317.76 L372.52,317.77 L373.22,318.99 L374.00,317.96 L374.90,318.48 L375.89,318.56 L376.94,317.85 L378.00,317.49 L379.03,317.34 L380.00,318.07 L380.86,318.82 L381.63,318.92 L382.38,319.43 L383.15,319.70 L384.00,320.50 L385.00,319.44 L386.11,320.33 L387.30,319.79 L388.56,318.58 L389.93,319.60 L391.40,317.55 L393.00,317.52 L394.73,317.62 L396.59,319.08 L398.56,318.73 L400.63,319.99 L402.78,320.42 L405.00,320.52 L407.33,319.79 L409.78,319.90 L412.31,320.63 L414.89,318.97 L417.47,318.93 L420.00,319.13 L422.44,319.65 L424.81,319.62 L427.19,320.12 L429.63,319.59 L432.21,320.72 L435.00,320.66 L438.04,319.66 L441.30,320.97 L444.69,321.16 L448.15,319.57 L451.61,319.70 L455.00,320.03 L458.39,318.43 L461.85,317.85 L465.31,317.77 L468.70,317.67 L471.96,317.21 L475.00,317.27 L477.79,316.64 L480.37,315.46 L482.81,315.76 L485.19,315.78 L487.56,314.84 L490.00,314.05 L492.67,312.74 L495.56,312.13 L498.44,310.15 L501.11,309.87 L503.37,308.60 L505.00,308.51 L506.00,308.15 L507.00,306.93 L508.00,306.94 L509.00,306.86 L510.00,305.21 L511.00,304.84 L512.00,304.09 L513.00,303.07 L514.00,303.46 L515.00,302.86 L516.00,301.84 L517.00,300.75 L518.00,299.74 L519.00,298.94 L520.00,297.53 L521.00,297.24 L522.00,296.22 L523.00,295.03 L524.00,293.18 L525.00,292.17 L526.00,290.72 L527.00,290.07 L528.00,287.93 L529.00,285.58 L530.00,284.61 L531.00,282.94 L532.00,280.94 L533.00,278.93 L534.00,276.73 L535.00,274.33 L536.00,271.93 L537.00,269.40 L538.00,266.72 L539.00,263.82 L540.00,260.73 L541.00,257.40 L542.00,253.90 L543.00,250.14 L544.00,246.16 L545.00,241.91 L545.25,240.80 L545.50,239.68 L545.75,238.54 L546.00,237.38 L546.25,236.21 L546.50,235.01 L546.75,233.80 L547.00,232.57 L547.25,231.32 L547.50,230.05 L547.75,228.76 L548.00,227.45 L548.25,226.13 L548.50,224.78 L548.75,223.41 L549.00,222.02 L549.25,220.61 L549.50,219.18 L549.75,217.72 L550.00,216.25 L550.25,214.75 L550.50,213.24 L550.75,211.70 L551.00,210.14 L551.25,208.56 L551.50,206.95 L551.75,205.32 L552.00,203.67 L552.25,202.00 L552.50,200.31 L552.75,198.59 L553.00,196.85 L553.25,195.09 L553.50,193.31 L553.75,191.50 L554.00,189.67 L554.25,187.82 L554.50,185.95 L554.75,184.05 L555.00,182.14 L555.25,180.20 L555.50,178.24 L555.75,176.26 L556.00,174.26 L556.25,172.24 L556.50,170.21 L556.75,168.15 L557.00,166.07 L557.25,163.98 L557.50,161.86 L557.75,159.73 L558.00,157.59 L558.25,155.43 L558.50,153.25 L558.75,151.06 L559.00,148.86 L559.25,146.65 L559.50,144.43 L559.75,142.19 L560.00,139.95 L560.25,137.70 L560.50,135.44 L560.75,133.18 L561.00,130.92 L561.25,128.66 L561.50,126.39 L561.75,124.13 L562.00,121.87 L562.25,119.61 L562.50,117.36 L562.75,115.12 L563.00,112.89 L563.25,110.67 L563.50,108.47 L563.75,106.28 L564.00,104.11 L564.25,101.97 L564.50,99.84 L564.75,97.74 L565.00,95.67 L565.25,93.63 L565.50,91.62 L565.75,89.65 L566.00,87.71 L566.25,85.81 L566.50,83.95 L566.75,82.14 L567.00,80.37 L567.25,78.66 L567.50,76.99 L567.75,75.38 L568.00,73.83 L568.25,72.33 L568.50,70.90 L568.75,69.52 L569.00,68.22 L569.25,66.98 L569.50,65.80 L569.75,64.70 L570.00,63.68 L570.25,62.72 L570.50,61.84 L570.75,61.04 L571.00,60.32 L571.25,59.68 L571.50,59.12 L571.75,58.64 L572.00,58.25 L572.25,57.93 L572.50,57.70 L572.75,57.56 L573.00,57.50 L573.25,57.53 L573.50,57.66 L573.75,57.88 L574.00,58.20 L574.25,58.62 L574.50,59.13 L574.75,59.73 L575.00,60.43 L575.25,61.22 L575.50,62.10 L575.75,63.07 L576.00,64.13 L576.25,65.27 L576.50,66.50 L576.75,67.81 L577.00,69.20 L577.25,70.67 L577.50,72.21 L577.75,73.83 L578.00,75.51 L578.25,77.27 L578.50,79.09 L578.75,80.97 L579.00,82.91 L579.25,84.91 L579.50,86.96 L579.75,89.07 L580.00,91.22 L580.25,93.42 L580.50,95.66 L580.75,97.94 L581.00,100.26 L581.25,102.62 L581.50,105.00 L581.75,107.42 L582.00,109.86 L582.25,112.33 L582.50,114.82 L582.75,117.32 L583.00,119.85 L583.25,122.38 L583.50,124.93 L583.75,127.49 L584.00,130.05 L584.25,132.62 L584.50,135.19 L584.75,137.76 L585.00,140.33 L585.25,142.90 L585.50,145.47 L585.75,148.02 L586.00,150.57 L586.25,153.11 L586.50,155.64 L586.75,158.15 L587.00,160.65 L587.25,163.14 L587.50,165.60 L587.75,168.06 L588.00,170.49 L588.25,172.90 L588.50,175.29 L588.75,177.66 L589.00,180.01 L589.25,182.34 L589.50,184.64 L589.75,186.92 L590.00,189.17 L590.25,191.40 L590.50,193.60 L590.75,195.78 L591.00,197.93 L591.25,200.05 L591.50,202.15 L591.75,204.22 L592.00,206.26 L592.25,208.27 L592.50,210.26 L592.75,212.22 L593.00,214.15 L593.25,216.05 L593.50,217.92 L593.75,219.77 L594.00,221.59 L594.25,223.38 L594.50,225.15 L594.75,226.88 L595.00,228.59 L595.25,230.27 L595.50,231.93 L595.75,233.56 L596.00,235.16 L596.25,236.73 L596.50,238.28 L596.75,239.81 L597.00,241.31 L597.25,242.78 L597.50,244.23 L597.75,245.65 L598.00,247.05 L598.25,248.42 L598.50,249.77 L598.75,251.10 L599.00,252.40 L599.25,253.66 L599.50,254.92 L599.75,256.20 L600.00,257.40 L601.00,262.04 L602.00,266.32 L603.00,270.41 L604.00,274.21 L605.00,277.49 L606.00,280.80 L607.00,283.75 L608.00,286.60 L609.00,289.15 L610.00,291.54 L611.00,293.69 L612.00,295.86 L613.00,297.73 L614.00,299.59 L615.00,301.27 L616.00,302.92 L617.00,304.24 L618.00,305.63 L619.00,307.06 L620.00,308.11 L621.00,309.22 L622.00,310.39 L623.00,311.30 L624.00,312.19 L625.00,313.06 L626.00,313.70 L627.00,314.65 L628.00,315.46 L629.00,316.04 L630.00,316.43 L631.00,317.23 L632.00,317.65 L633.00,318.26 L634.00,318.79 L635.00,319.11 L636.00,319.84 L637.00,320.10 L638.00,320.59 L639.00,320.95 L640.00,321.38 L641.00,321.70" fill="none" stroke="#ffff00" stroke-width="2" stroke-linejoin="round"/>
<line x1="1.5" y1="2" x2="1.5" y2="364" stroke="#c4c4c4" stroke-width="1"/>
<line x1="1" y1="364.5" x2="641" y2="364.5" stroke="#c8c8c8" stroke-width="1"/>
</svg>
<div id="y0" class="tx" style="left:2.90px;top:99.98px;font-size:9px;line-height:10.8px;font-weight:bold;color:#fff;transform:scaleX(0.87);">8,4</div>
<div id="y1" class="tx" style="left:2.90px;top:120.29px;font-size:9px;line-height:10.8px;font-weight:bold;color:#fff;transform:scaleX(0.87);">7,8</div>
<div id="y2" class="tx" style="left:2.90px;top:140.61px;font-size:9px;line-height:10.8px;font-weight:bold;color:#fff;transform:scaleX(0.87);">7,2</div>
<div id="y3" class="tx" style="left:2.90px;top:160.92px;font-size:9px;line-height:10.8px;font-weight:bold;color:#fff;transform:scaleX(0.87);">6,6</div>
<div id="y4" class="tx" style="left:2.90px;top:181.23px;font-size:9px;line-height:10.8px;font-weight:bold;color:#fff;transform:scaleX(0.87);">6,0</div>
<div id="y5" class="tx" style="left:2.90px;top:201.54px;font-size:9px;line-height:10.8px;font-weight:bold;color:#fff;transform:scaleX(0.87);">5,4</div>
<div id="y6" class="tx" style="left:2.90px;top:221.85px;font-size:9px;line-height:10.8px;font-weight:bold;color:#fff;transform:scaleX(0.87);">4,8</div>
<div id="y7" class="tx" style="left:2.90px;top:242.17px;font-size:9px;line-height:10.8px;font-weight:bold;color:#fff;transform:scaleX(0.87);">4,2</div>
<div id="y8" class="tx" style="left:2.90px;top:262.48px;font-size:9px;line-height:10.8px;font-weight:bold;color:#fff;transform:scaleX(0.87);">3,6</div>
<div id="y9" class="tx" style="left:2.90px;top:282.79px;font-size:9px;line-height:10.8px;font-weight:bold;color:#fff;transform:scaleX(0.87);">3,0</div>
<div id="y10" class="tx" style="left:2.90px;top:303.10px;font-size:9px;line-height:10.8px;font-weight:bold;color:#fff;transform:scaleX(0.87);">2,4</div>
<div id="y11" class="tx" style="left:2.90px;top:323.41px;font-size:9px;line-height:10.8px;font-weight:bold;color:#fff;transform:scaleX(0.87);">1,8</div>
<div id="y12" class="tx" style="left:2.90px;top:343.73px;font-size:9px;line-height:10.8px;font-weight:bold;color:#fff;transform:scaleX(0.87);">1,2</div>
<div id="y13" class="tx" style="left:2.90px;top:364.04px;font-size:9px;line-height:10.8px;font-weight:bold;color:#fff;transform:scaleX(0.87);">0,6</div>
<div id="y14" class="tx" style="left:2.90px;top:384.35px;font-size:9px;line-height:10.8px;font-weight:bold;color:#fff;transform:scaleX(0.87);">0,0</div>
<div id="y15" class="tx" style="left:2.90px;top:404.66px;font-size:9px;line-height:10.8px;font-weight:bold;color:#fff;transform:scaleX(0.87);">-0,6</div>
<div id="y16" class="tx" style="left:2.90px;top:424.97px;font-size:9px;line-height:10.8px;font-weight:bold;color:#fff;transform:scaleX(0.87);">-1,2</div>
<div id="y17" class="tx" style="left:2.90px;top:445.29px;font-size:9px;line-height:10.8px;font-weight:bold;color:#fff;transform:scaleX(0.87);">-1,8</div>
<div id="x0" class="tx" style="left:72.36px;top:445.06px;font-size:8.6px;line-height:10.32px;font-weight:bold;color:#fff;">-90°</div>
<div id="x1" class="tx" style="left:128.20px;top:445.06px;font-size:8.6px;line-height:10.32px;font-weight:bold;color:#fff;">0°</div>
<div id="x2" class="tx" style="left:184.04px;top:445.06px;font-size:8.6px;line-height:10.32px;font-weight:bold;color:#fff;">90°</div>
<div id="x3" class="tx" style="left:239.88px;top:445.06px;font-size:8.6px;line-height:10.32px;font-weight:bold;color:#fff;">180°</div>
<div id="x4" class="tx" style="left:295.72px;top:445.06px;font-size:8.6px;line-height:10.32px;font-weight:bold;color:#fff;">270°</div>
<div id="x5" class="tx" style="left:351.56px;top:445.06px;font-size:8.6px;line-height:10.32px;font-weight:bold;color:#fff;">360°</div>
<div id="x6" class="tx" style="left:407.40px;top:445.06px;font-size:8.6px;line-height:10.32px;font-weight:bold;color:#fff;">450°</div>
<div id="x7" class="tx" style="left:463.24px;top:445.06px;font-size:8.6px;line-height:10.32px;font-weight:bold;color:#fff;">540°</div>
<div id="x8" class="tx" style="left:519.08px;top:445.06px;font-size:8.6px;line-height:10.32px;font-weight:bold;color:#fff;">630°</div>
<div id="x9" class="tx" style="left:574.92px;top:445.06px;font-size:8.6px;line-height:10.32px;font-weight:bold;color:#fff;">720°</div>
<div id="l1" class="tx" style="left:128.10px;top:91.64px;font-size:8.3px;line-height:9.96px;font-weight:bold;color:#fff;transform:scaleX(0.9731);">ВМТ</div>
<div id="l2" class="tx" style="left:239.70px;top:91.64px;font-size:8.3px;line-height:9.96px;font-weight:bold;color:#22e022;transform:scaleX(0.9897);">НМТ</div>
<div id="l3" class="tx" style="left:351.50px;top:91.64px;font-size:8.3px;line-height:9.96px;font-weight:bold;color:#22e022;transform:scaleX(0.9953);">ВМТ</div>
<div id="l4" class="tx" style="left:462.50px;top:91.64px;font-size:8.3px;line-height:9.96px;font-weight:bold;color:#22e022;">НМТ</div>
<div id="l5" class="tx" style="left:583.60px;top:91.94px;font-size:10px;line-height:12.0px;font-weight:bold;color:#fff;transform:scaleX(1.0463);">бар(°ПКВ)</div>
<div class="abs" style="left:641px;top:90px;width:9px;height:365px;background:#eae9e4"></div>
<div class="abs" style="left:641px;top:90px;width:1px;height:365px;background:#fafafa"></div>
<div class="b3" style="left:641px;top:90px;width:9px;height:8.5px"></div>
<svg class="abs" style="left:643px;top:92.5px" width="5" height="3" viewBox="0 0 5 3"><path d="M0.5,2.5 h4 l-2,-2.2z" fill="#000"/></svg>
<div class="b3" style="left:641px;top:306.3px;width:9px;height:49.5px"></div>
<div class="b3" style="left:641px;top:448.5px;width:9px;height:6.5px"></div>
<svg class="abs" style="left:643px;top:450.5px" width="5" height="3" viewBox="0 0 5 3"><path d="M0.5,0.5 h4 l-2,2.2z" fill="#000"/></svg>
<div class="abs" style="left:0;top:455px;width:641px;height:1.5px;background:#000"></div>
<div class="abs" style="left:0;top:456px;width:641px;height:9px;background:#eae9e4"></div>
<div class="b3" style="left:0;top:456.5px;width:7.5px;height:8px"></div>
<svg class="abs" style="left:2px;top:458.5px" width="3" height="5" viewBox="0 0 3 5"><path d="M2.5,0.3 v4.4 l-2.2,-2.2z" fill="#000"/></svg>
<div class="b3" style="left:570px;top:456px;width:7.6px;height:8.5px"></div>
<div class="b3" style="left:633.4px;top:456.5px;width:7.5px;height:8px"></div>
<svg class="abs" style="left:636px;top:458.5px" width="3" height="5" viewBox="0 0 3 5"><path d="M0.5,0.3 v4.4 l2.2,-2.2z" fill="#000"/></svg>
<div class="abs" style="left:641px;top:455px;width:9px;height:10px;background:#e4e2dc"></div>
<div class="abs" style="left:0;top:465px;width:650px;height:31px;background:#d4d0c8"></div>
<div class="abs" style="left:64.0px;top:465px;width:1.2px;height:31px;background:#0c0c0c"></div>
<div class="abs" style="left:129.0px;top:465px;width:1.2px;height:31px;background:#0c0c0c"></div>
<div class="abs" style="left:194.0px;top:465px;width:1.2px;height:31px;background:#0c0c0c"></div>
<div class="abs" style="left:259.0px;top:465px;width:1.2px;height:31px;background:#0c0c0c"></div>
<div class="abs" style="left:324.0px;top:465px;width:1.2px;height:31px;background:#0c0c0c"></div>
<div class="abs" style="left:389.0px;top:465px;width:1.2px;height:31px;background:#0c0c0c"></div>
<div class="abs" style="left:454.0px;top:465px;width:1.2px;height:31px;background:#0c0c0c"></div>
<div class="abs" style="left:519.0px;top:465px;width:1.2px;height:31px;background:#0c0c0c"></div>
<div class="abs" style="left:584.0px;top:465px;width:1.2px;height:31px;background:#0c0c0c"></div>
<div id="f1" class="tx" style="left:29.38px;top:484.12px;font-size:6px;line-height:7.2px;font-weight:normal;color:#000;transform:scaleX(0.8909);-webkit-text-stroke:0.12px #000;">F1</div>
<div id="f2" class="tx" style="left:94.38px;top:484.12px;font-size:6px;line-height:7.2px;font-weight:normal;color:#000;transform:scaleX(0.8909);-webkit-text-stroke:0.12px #000;">F2</div>
<div id="f3" class="tx" style="left:159.38px;top:484.12px;font-size:6px;line-height:7.2px;font-weight:normal;color:#8a8a8a;transform:scaleX(0.8909);-webkit-text-stroke:0.12px #8a8a8a;">F3</div>
<div id="f4" class="tx" style="left:224.38px;top:484.12px;font-size:6px;line-height:7.2px;font-weight:normal;color:#000;transform:scaleX(0.8909);-webkit-text-stroke:0.12px #000;">F4</div>
<div id="f5" class="tx" style="left:289.38px;top:484.12px;font-size:6px;line-height:7.2px;font-weight:normal;color:#000;transform:scaleX(0.8909);-webkit-text-stroke:0.12px #000;">F5</div>
<div id="f6" class="tx" style="left:354.38px;top:484.12px;font-size:6px;line-height:7.2px;font-weight:normal;color:#000;transform:scaleX(0.8909);-webkit-text-stroke:0.12px #000;">F6</div>
<div id="f7" class="tx" style="left:419.38px;top:484.12px;font-size:6px;line-height:7.2px;font-weight:normal;color:#000;transform:scaleX(0.8909);-webkit-text-stroke:0.12px #000;">F7</div>
<div id="f8" class="tx" style="left:484.38px;top:484.12px;font-size:6px;line-height:7.2px;font-weight:normal;color:#000;transform:scaleX(0.8909);-webkit-text-stroke:0.12px #000;">F8</div>
<div id="f9" class="tx" style="left:549.38px;top:484.12px;font-size:6px;line-height:7.2px;font-weight:normal;color:#8a8a8a;transform:scaleX(0.8909);-webkit-text-stroke:0.12px #8a8a8a;">F9</div>
<div id="f10" class="tx" style="left:612.90px;top:484.12px;font-size:6px;line-height:7.2px;font-weight:normal;color:#000;transform:scaleX(0.8894);-webkit-text-stroke:0.12px #000;">F10</div>
<svg class="abs" style="left:0;top:465px" width="650" height="31" viewBox="0 465 650 31">
<text x="33" y="482" font-size="14" font-weight="bold" font-family="Liberation Sans" fill="#000" text-anchor="middle">?</text>
<path d="M88,477.3 C90,480.6 93.2,481.6 95.6,479 L100.6,472.6 C102,470.6 104,470.6 105.4,473 L107.3,477.4" stroke="#000" stroke-width="1.3" fill="none"/>
<path d="M91.4,471 L95.9,475.3 M95.9,471 L91.4,475.3 M91,473.15 h5.3" stroke="#000" stroke-width="1"/>
<rect x="107.2" y="469" width="3.3" height="3" fill="#10d010"/>
<path d="M156,469.6 v12.4 h14" stroke="#707070" stroke-width="0.9" fill="none"/><path d="M169,480.8 l1.5,1.2 l-1.5,1.2" stroke="#707070" stroke-width="0.8" fill="none"/>
<path d="M166,475.5 l3,3.5 M169,475.5 l-3,3.5" stroke="#707070" stroke-width="0.9"/>
<path d="M221,482 v-11" stroke="#000" stroke-width="1.1" fill="none"/><path d="M219.3,472.5 l1.7,-3.2 l1.7,3.2z" fill="#000"/><path d="M221,482 h14" stroke="#808080" stroke-width="0.9"/>
<path d="M225,470 l1.7,2 l1.7,-2 M226.7,472 v2" stroke="#000" stroke-width="0.9" fill="none"/>
<path d="M299.8,469.4 L294.3,478.3" stroke="#202020" stroke-width="1.6"/><path d="M286,481.3 L290.8,479.2 L293.2,482.6 L288.6,484.6z" fill="#8a8a8a"/><circle cx="286.8" cy="481.8" r="1" fill="#111"/><path d="M292.3,477.2 L296.6,479.6 L294.6,483.2 L290.4,480.6z" fill="#fff" stroke="#111" stroke-width="0.9"/>
<path d="M354.5,470.5 v10.5 l7,-5.25z" fill="none" stroke="#000" stroke-width="1.4" stroke-linejoin="round"/>
<path d="M415,475.5 h15 M427.5,473.5 l3,2 l-3,2" stroke="#000" stroke-width="1.2" fill="none"/><path d="M431,478.5 h-14 M419,476.8 l-2.5,1.7 l2.5,1.7" stroke="#777" stroke-width="0.9" fill="none"/>
<circle cx="487.4" cy="476" r="4" fill="none" stroke="#000" stroke-width="1.2"/><path d="M479,476 h18 M487.4,469.5 v13" stroke="#000" stroke-width="1"/>
<path d="M546,480 l13,-6.5 M547,472.5 h4 M549,470.5 v4 M557,479.5 h3" stroke="#808080" stroke-width="1.1"/><rect x="563" y="469.6" width="2.5" height="2.5" fill="none" stroke="#a8a8a8" stroke-width="0.6"/>
<path d="M617,471 l-5,6 l5,6 l4,-4.5 M621,473.5 l-4,-2.5" stroke="#000" stroke-width="1.3" fill="none" stroke-linejoin="round"/><path d="M617,477 h8 M623,475 l2,2 l-2,2" stroke="#000" stroke-width="1.2" fill="none"/>
</svg>
</body></html>
